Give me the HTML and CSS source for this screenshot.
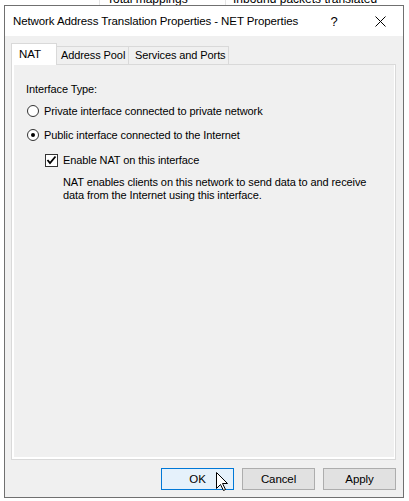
FILE: index.html
```html
<!DOCTYPE html>
<html>
<head>
<meta charset="utf-8">
<link rel="stylesheet" href="styles.css">
</head>
<body>
<div class="bg-header">
  <div class="bg-cell first"></div>
  <div class="bg-cell mid">Total mappings</div>
  <div class="bg-cell">Inbound packets translated</div>
</div>

<div class="dialog">
  <div class="titlebar">
    <span class="title">Network Address Translation Properties - NET Properties</span>
    <span class="tb-btn help">?</span>
    <span class="tb-btn close">
      <svg width="11" height="11" viewBox="0 0 11 11"><path d="M0.5 0.5 L10.5 10.5 M10.5 0.5 L0.5 10.5" stroke="#000" stroke-width="1" fill="none"/></svg>
    </span>
  </div>
  <div class="body">
    <div class="tabs">
      <div class="tab active">NAT</div>
      <div class="tab pool">Address Pool</div>
      <div class="tab svc">Services and Ports</div>
    </div>
    <div class="panel">
      <div class="label">Interface Type:</div>
      <div class="option">
        <span class="radio"></span>
        <span>Private interface connected to private network</span>
      </div>
      <div class="option">
        <span class="radio checked"></span>
        <span>Public interface connected to the Internet</span>
      </div>
      <div class="option check-row">
        <span class="checkbox">
          <svg width="11" height="11" viewBox="0 0 11 11"><path d="M1.5 5 L4 8 L9.5 1.5" stroke="#000" stroke-width="1.8" fill="none"/></svg>
        </span>
        <span>Enable NAT on this interface</span>
      </div>
      <div class="desc">NAT enables clients on this network to send data to and receive<br>data from the Internet using this interface.</div>
    </div>
    <div class="buttons">
      <div class="btn default">OK</div>
      <div class="btn">Cancel</div>
      <div class="btn">Apply</div>
    </div>
  </div>
  <svg class="cursor" width="13" height="20" viewBox="0 0 13 20">
    <path d="M0.5 0.5 L0.5 16.5 L4.5 12.5 L7.5 18.5 L9.5 17.5 L6.5 11.5 L11.5 11.5 Z" fill="#fff" stroke="#000" stroke-width="1" stroke-linejoin="miter"/>
  </svg>
</div>
</body>
</html>
```

FILE: styles.css
```css
html, body {
  margin: 0;
  padding: 0;
}
body {
  width: 409px;
  height: 501px;
  overflow: hidden;
  position: relative;
  background: #fff;
  font-family: "Liberation Sans", Arial, sans-serif;
  font-size: 11px;
  letter-spacing: -0.1px;
  color: #000;
}
.bg-header {
  display: flex;
  margin-top: -8px;
  height: 14px;
  line-height: 14px;
  font-size: 12px;
  letter-spacing: 0;
}
.bg-cell {
  padding-left: 7px;
  border-right: 1px solid #e5e5e5;
  white-space: nowrap;
}
.bg-cell.first { width: 92px; }
.bg-cell.mid { width: 118px; }
.bg-cell:last-child { border-right: none; }

.dialog {
  position: absolute;
  left: 4px;
  top: 5px;
  width: 398px;
  height: 491px;
  border: 1px solid #707070;
  background: #f0f0f0;
  display: flex;
  flex-direction: column;
}
.titlebar {
  height: 30px;
  background: #fff;
  display: flex;
  align-items: center;
  flex: none;
}
.title {
  padding-left: 8px;
  flex: 1;
  white-space: nowrap;
  font-size: 11.5px;
}
.tb-btn {
  width: 46px;
  height: 30px;
  display: flex;
  align-items: center;
  justify-content: center;
}
.help { font-size: 13px; }
.body {
  flex: 1;
  padding: 7px 7px 7px 6px;
  display: flex;
  flex-direction: column;
}
.tabs {
  display: flex;
  align-items: flex-end;
  height: 21px;
  position: relative;
  z-index: 1;
}
.tab {
  height: 18px;
  box-sizing: border-box;
  border: 1px solid #d9d9d9;
  border-bottom: none;
  background: #f0f0f0;
  line-height: 17px;
  white-space: nowrap;
}
.tab.active {
  height: 22px;
  margin-bottom: -1px;
  width: 46px;
  padding-left: 7px;
  line-height: 20px;
  background: #fff;
  border-color: #d9d9d9;
  font-size: 11.5px;
}
.tab.pool {
  width: 72px;
  padding-left: 4px;
  border-left: none;
}
.tab.svc {
  width: 100px;
  padding-left: 6px;
  border-left: none;
}
.panel {
  height: 396px;
  box-sizing: border-box;
  border: 1px solid #d9d9d9;
  box-shadow: inset 2px -2px 0 #fff, inset -1px 0 0 #fff;
  background: #f0f0f0;
  padding: 17px 0 0 14px;
}
.label {
  line-height: 15px;
  height: 15px;
}
.option {
  display: flex;
  align-items: center;
  height: 24px;
  white-space: nowrap;
}
.label + .option { margin-top: 2px; }
.radio {
  width: 10px;
  height: 10px;
  border: 1px solid #333;
  border-radius: 50%;
  background: #fff;
  margin-left: 1px;
  margin-right: 5px;
  position: relative;
  flex: none;
}
.radio.checked::after {
  content: "";
  position: absolute;
  left: 3px;
  top: 3px;
  width: 4px;
  height: 4px;
  border-radius: 50%;
  background: #000;
}
.check-row {
  padding-left: 19px;
  margin-top: 1px;
}
.checkbox {
  width: 11px;
  height: 11px;
  border: 1px solid #333;
  background: #fff;
  margin-right: 5px;
  display: flex;
  align-items: center;
  justify-content: center;
  flex: none;
}
.desc {
  padding-left: 37px;
  margin-top: 4px;
  line-height: 13px;
  white-space: nowrap;
}
.buttons {
  display: flex;
  justify-content: flex-end;
  gap: 8px;
  margin-top: 8px;
}
.btn {
  width: 73px;
  height: 22px;
  box-sizing: border-box;
  border: 1px solid #adadad;
  background: #e1e1e1;
  display: flex;
  align-items: center;
  justify-content: center;
  font-size: 11.5px;
}
.btn.default {
  border-color: #0078d7;
  background: #e5f1fb;
}
.cursor {
  position: absolute;
  left: 211px;
  top: 466px;
}
```
